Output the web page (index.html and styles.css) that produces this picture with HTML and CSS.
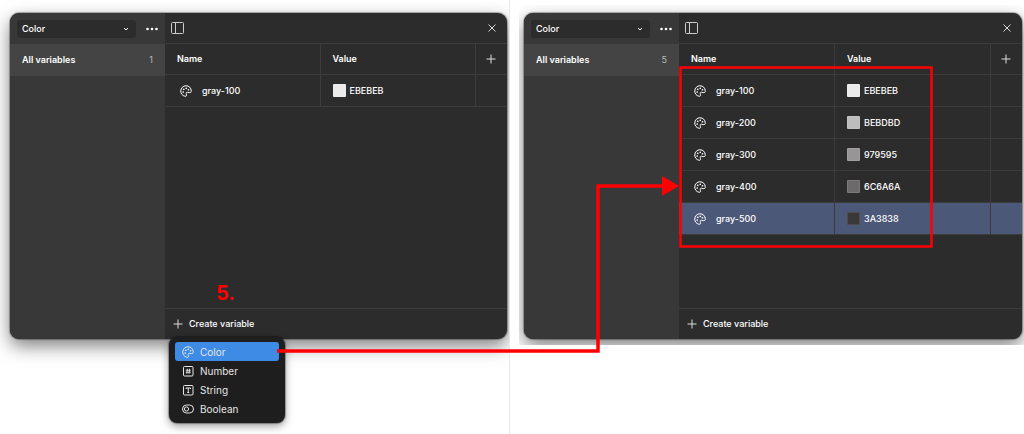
FILE: index.html
```html
<!DOCTYPE html>
<html lang="en">
<head>
  <meta charset="utf-8">
  <title>Create color variables</title>
  <link rel="stylesheet" href="styles.css">
</head>
<body>
  <!-- Shared icons -->
  <svg class="sprite" aria-hidden="true">
    <symbol id="palette" viewBox="0 0 24 24">
      <path d="M12 1.500C6.200 1.500 1.500 6.200 1.500 12c0 5 3 9.500 8.500 10.500 2.500.4 3.500-1 3-3l-.5-2c-.4-2 .8-3.200 2.500-3l3.500.8c2.500.4 4-1 4-3.500C22.500 5.800 17.800 1.500 12 1.500z" fill="none" stroke="currentColor" stroke-width="2"/>
      <circle cx="6.500" cy="14" r="1.700" fill="currentColor"/>
      <circle cx="7.500" cy="8.500" r="1.700" fill="currentColor"/>
      <circle cx="12.500" cy="6.500" r="1.700" fill="currentColor"/>
      <circle cx="17" cy="9.500" r="1.700" fill="currentColor"/>
    </symbol>
    <symbol id="plus" viewBox="0 0 10 10">
      <path d="M5 .5v9M.5 5h9" fill="none" stroke="currentColor"/>
    </symbol>
    <symbol id="close" viewBox="0 0 10 10">
      <path d="M1.500 1.500l7 7M8.500 1.500l-7 7" fill="none" stroke="currentColor"/>
    </symbol>
    <symbol id="sidebar" viewBox="0 0 14 12">
      <path d="M1.500.5h10q1 0 1 1v9q0 1-1 1h-10q-1 0-1-1v-9q0-1 1-1zM4.500.5v11" fill="none" stroke="currentColor"/>
    </symbol>
    <symbol id="dots" viewBox="0 0 12 4">
      <circle cx="1.500" cy="2" r="1.300" fill="currentColor"/>
      <circle cx="6" cy="2" r="1.300" fill="currentColor"/>
      <circle cx="10.500" cy="2" r="1.300" fill="currentColor"/>
    </symbol>
    <symbol id="chevron" viewBox="0 0 6 4">
      <path d="M1 1l2 2 2-2" fill="none" stroke="currentColor"/>
    </symbol>
    <symbol id="number" viewBox="0 0 24 24">
      <rect x="3" y="3" width="19" height="19" rx="2" fill="none" stroke="currentColor" stroke-width="2"/>
      <path d="M10.800 7.500l-1 10M15.200 7.500l-1 10M7.500 10.500h10M7.500 14.500h10" fill="none" stroke="currentColor" stroke-width="1.800"/>
    </symbol>
    <symbol id="string" viewBox="0 0 24 24">
      <rect x="3" y="3" width="19" height="19" rx="2" fill="none" stroke="currentColor" stroke-width="2"/>
      <path d="M8 10V8h9v2M12.500 8v9M10.500 17h4" fill="none" stroke="currentColor" stroke-width="2"/>
    </symbol>
    <symbol id="boolean" viewBox="0 0 24 24">
      <rect x="1" y="4" width="22" height="16" rx="8" fill="none" stroke="currentColor" stroke-width="2"/>
      <circle cx="9" cy="12" r="4.200" fill="none" stroke="currentColor" stroke-width="2"/>
    </symbol>
  </svg>

  <main class="stage">
    <section class="shot shot-before">
      <div class="panel">
        <aside class="sidebar">
          <div class="sidebar-head">
            <div class="collection">
              <select aria-label="Collection"><option>Color</option></select>
              <svg class="chevron"><use href="#chevron"/></svg>
            </div>
            <button class="icon-button" aria-label="More"><svg class="dots"><use href="#dots"/></svg></button>
          </div>
          <a class="group" href="#all"><span>All variables</span><span class="count">1</span></a>
        </aside>
        <div class="content">
          <div class="toolbar">
            <button class="icon-button" aria-label="Toggle sidebar"><svg class="toggle"><use href="#sidebar"/></svg></button>
            <button class="icon-button" aria-label="Close"><svg class="small"><use href="#close"/></svg></button>
          </div>
          <table class="variables">
            <thead>
              <tr>
                <th class="name">Name</th>
                <th class="value">Value</th>
                <th class="action"><button class="icon-button" aria-label="Add mode"><svg class="small"><use href="#plus"/></svg></button></th>
              </tr>
            </thead>
            <tbody>
              <tr>
                <td><div class="variable"><svg class="icon"><use href="#palette"/></svg>gray-100</div></td>
                <td><div class="color"><span class="swatch" style="background: #ebebeb"></span>EBEBEB</div></td>
                <td></td>
              </tr>
            </tbody>
          </table>
          <div class="footer">
            <button class="create"><svg class="small"><use href="#plus"/></svg>Create variable</button>
            <div class="menu">
              <button class="menu-item selected"><svg class="icon"><use href="#palette"/></svg>Color</button>
              <button class="menu-item"><svg class="icon"><use href="#number"/></svg>Number</button>
              <button class="menu-item"><svg class="icon"><use href="#string"/></svg>String</button>
              <button class="menu-item"><svg class="icon"><use href="#boolean"/></svg>Boolean</button>
            </div>
          </div>
        </div>
      </div>
    </section>

    <section class="shot shot-after">
      <div class="panel">
        <aside class="sidebar">
          <div class="sidebar-head">
            <div class="collection">
              <select aria-label="Collection"><option>Color</option></select>
              <svg class="chevron"><use href="#chevron"/></svg>
            </div>
            <button class="icon-button" aria-label="More"><svg class="dots"><use href="#dots"/></svg></button>
          </div>
          <a class="group" href="#all"><span>All variables</span><span class="count">5</span></a>
        </aside>
        <div class="content">
          <div class="toolbar">
            <button class="icon-button" aria-label="Toggle sidebar"><svg class="toggle"><use href="#sidebar"/></svg></button>
            <button class="icon-button" aria-label="Close"><svg class="small"><use href="#close"/></svg></button>
          </div>
          <table class="variables">
            <thead>
              <tr>
                <th class="name">Name</th>
                <th class="value">Value</th>
                <th class="action"><button class="icon-button" aria-label="Add mode"><svg class="small"><use href="#plus"/></svg></button></th>
              </tr>
            </thead>
            <tbody>
              <tr>
                <td><div class="variable"><svg class="icon"><use href="#palette"/></svg>gray-100</div></td>
                <td><div class="color"><span class="swatch" style="background: #ebebeb"></span>EBEBEB</div></td>
                <td></td>
              </tr>
              <tr>
                <td><div class="variable"><svg class="icon"><use href="#palette"/></svg>gray-200</div></td>
                <td><div class="color"><span class="swatch" style="background: #bebdbd"></span>BEBDBD</div></td>
                <td></td>
              </tr>
              <tr>
                <td><div class="variable"><svg class="icon"><use href="#palette"/></svg>gray-300</div></td>
                <td><div class="color"><span class="swatch" style="background: #979595"></span>979595</div></td>
                <td></td>
              </tr>
              <tr>
                <td><div class="variable"><svg class="icon"><use href="#palette"/></svg>gray-400</div></td>
                <td><div class="color"><span class="swatch" style="background: #6c6a6a"></span>6C6A6A</div></td>
                <td></td>
              </tr>
              <tr class="active">
                <td><div class="variable"><svg class="icon"><use href="#palette"/></svg>gray-500</div></td>
                <td><div class="color"><span class="swatch" style="background: #3a3838"></span>3A3838</div></td>
                <td></td>
              </tr>
            </tbody>
          </table>
          <div class="footer">
            <button class="create"><svg class="small"><use href="#plus"/></svg>Create variable</button>
          </div>
        </div>
      </div>
    </section>

    <!-- Step number and arrow over both panels -->
    <strong class="step">5.</strong>
    <svg class="arrow" viewBox="0 0 1024 434" aria-hidden="true">
      <path d="M277 351H598V186H664" fill="none" stroke="#f00" stroke-width="3.500"/>
      <path d="M662 176l17 10-17 10z" fill="#f00"/>
      <rect x="680.500" y="67.500" width="251" height="179" fill="none" stroke="#f00" stroke-width="2.500"/>
    </svg>
  </main>
</body>
</html>
```

FILE: styles.css
```css
* {
  box-sizing: border-box;
}

body {
  margin: 0;
  background: #fff;
  color: #fff;
  font-family: Inter, "Liberation Sans", sans-serif;
  font-size: 9px;
  line-height: 12px;
}

button,
select {
  padding: 0;
  border: 0;
  background: none;
  color: inherit;
  font: inherit;
}

svg {
  display: block;
  flex: none;
}

.sprite {
  position: absolute;
  width: 0;
  height: 0;
}

.stage {
  position: relative;
  display: grid;
  grid-template-columns: 510fr 514fr;
  align-items: start;
  min-height: 100vh;
  overflow: hidden;
}

/* Shots */
.shot {
  overflow: hidden;
}

.shot-before {
  min-height: 100vh;
  padding: 13px 2px 0 10px;
  border-right: 1px solid #e8e8e8;
}

.shot-after {
  margin: 5px 0 0 9px;
  padding: 8px 2px 6px 5px;
}

.panel {
  display: flex;
  min-height: 326px;
  border-radius: 9px;
  background: #2c2c2c;
  box-shadow: 0 0 1px 1px rgba(0, 0, 0, 0.3), 0 7px 18px rgba(0, 0, 0, 0.5);
}

/* Sidebar */
.sidebar {
  flex: none;
  width: 155px;
  border-radius: 9px 0 0 9px;
  background: #383838;
}

.sidebar-head {
  display: flex;
  align-items: center;
  justify-content: space-between;
  height: 31px;
  padding: 0 7px;
}

.collection {
  display: flex;
  align-items: center;
  width: 119px;
  padding-right: 7px;
  border-radius: 3px;
  background: #2c2c2c;
}

.collection select {
  flex: 1;
  height: 18px;
  padding-left: 5px;
  appearance: none;
  font-weight: 500;
}

.chevron {
  width: 6px;
  height: 4px;
}

.dots {
  width: 12px;
  height: 4px;
}

.group {
  display: flex;
  align-items: center;
  justify-content: space-between;
  height: 32px;
  padding: 0 12px;
  background: #444;
  color: #fff;
  font-weight: 600;
  text-decoration: none;
}

.count {
  color: #b8b8b8;
  font-weight: 400;
}

/* Variables table */
.content {
  display: flex;
  flex: 1;
  flex-direction: column;
}

.toolbar {
  display: flex;
  align-items: center;
  justify-content: space-between;
  height: 30px;
  padding: 0 10px 0 6px;
}

.toggle {
  width: 14px;
  height: 12px;
  color: #ccc;
}

.small {
  width: 10px;
  height: 10px;
  color: #ddd;
}

.variables {
  width: 100%;
  table-layout: fixed;
  border-spacing: 0;
  border-top: 1px solid #3c3c3c;
}

.variables th,
.variables td {
  height: 32px;
  padding: 0 12px;
  border-right: 1px solid #3c3c3c;
  border-bottom: 1px solid #3c3c3c;
  font-weight: 500;
  text-align: left;
}

.variables th {
  height: 31px;
  font-weight: 600;
}

.variables th:last-child,
.variables td:last-child {
  border-right: 0;
}

.variables .action {
  width: 31px;
  padding: 0 10px;
}

.icon-button {
  display: block;
}

.variable {
  display: flex;
  align-items: center;
  gap: 10px;
  padding-left: 3px;
}

.icon {
  width: 12px;
  height: 12px;
}

.color {
  display: flex;
  align-items: center;
  gap: 4px;
}

.swatch {
  width: 13px;
  height: 13px;
  border: 1px solid rgba(255, 255, 255, 0.1);
  border-radius: 1px;
}

.active {
  background: #4c5878;
}

/* Footer and type menu */
.footer {
  position: relative;
  display: flex;
  align-items: center;
  height: 31px;
  margin-top: auto;
  padding-left: 8px;
  border-top: 1px solid #3c3c3c;
}

.create {
  display: flex;
  align-items: center;
  gap: 6px;
  font-weight: 500;
}

.menu {
  position: absolute;
  top: 28px;
  left: 4px;
  width: 116px;
  padding: 5px 6px;
  border-radius: 8px;
  background: #1e1e1e;
  box-shadow: 0 0 1px 1px rgba(0, 0, 0, 0.3), 0 3px 8px rgba(0, 0, 0, 0.4);
}

.menu-item {
  display: flex;
  align-items: center;
  gap: 6px;
  width: 100%;
  height: 19px;
  padding-left: 7px;
  border-radius: 3px;
  color: #e6e6e6;
  font-size: 10px;
}

.menu-item.selected {
  background: #3d8be4;
}

/* Annotations */
.step {
  position: absolute;
  top: 281px;
  left: 216px;
  color: #f00;
  font-size: 20px;
  line-height: 24px;
}

.arrow {
  position: absolute;
  top: 0;
  left: 0;
  width: 1024px;
  height: 434px;
  pointer-events: none;
}
```
